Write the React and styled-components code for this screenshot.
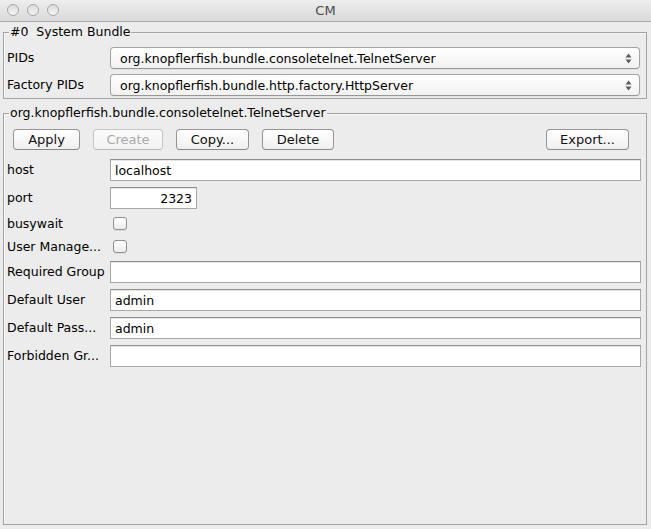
import React from 'react';
import styled, { createGlobalStyle } from 'styled-components';

const GlobalStyle = createGlobalStyle`
  html, body {
    margin: 0;
    padding: 0;
    background: #ececec;
  }
  body {
    font-family: "DejaVu Sans", "Liberation Sans", sans-serif;
    font-size: 12.5px;
    color: #000;
  }
`;

const Window = styled.div`
  width: 651px;
  height: 529px;
  display: flex;
  flex-direction: column;
  background: #ececec;
  overflow: hidden;
`;

const TitleBar = styled.div`
  height: 22px;
  box-sizing: border-box;
  position: relative;
  display: flex;
  align-items: center;
  justify-content: center;
  background: linear-gradient(#eeeeee, #d9d9d9);
  border-bottom: 1px solid #ababab;
`;

const Lights = styled.div`
  position: absolute;
  left: 7px;
  top: 4px;
  display: flex;
  gap: 8px;
`;

const Light = styled.span`
  width: 12px;
  height: 12px;
  box-sizing: border-box;
  border-radius: 50%;
  border: 1px solid #a7a7a7;
  background: linear-gradient(#dcdcdc, #f3f3f3);
`;

const Title = styled.span`
  font-size: 13px;
  color: #4a4a4a;
`;

const Content = styled.div`
  flex: 1;
  display: flex;
  flex-direction: column;
  padding: 0 4px 4px 3px;
  min-height: 0;
`;

const Group = styled.fieldset`
  margin: ${({ $top }) => $top}px 0 0;
  padding: ${({ $pad }) => $pad};
  min-width: 0;
  flex: ${({ $grow }) => ($grow ? 1 : 'none')};
  border: 1px solid #a3a3a3;
  box-shadow: inset 1px 1px 0 #f7f7f7;
  display: flex;
  flex-direction: column;
`;

const Legend = styled.legend`
  padding: 0 1px;
  margin-left: 2px;
  line-height: 16px;
`;

const Form = styled.div`
  display: grid;
  grid-template-columns: 103px 1fr;
  row-gap: ${({ $gap }) => $gap}px;
  align-items: center;
`;

const Label = styled.div`
  white-space: nowrap;
  overflow: hidden;
  line-height: 16px;
`;

const Combo = styled.div`
  height: 22px;
  box-sizing: border-box;
  border: 1px solid #a4a4a4;
  border-bottom-color: #979797;
  border-radius: 4px;
  background: linear-gradient(#ffffff, #f1f1f1);
  box-shadow: 0 1px 0 rgba(0, 0, 0, 0.04);
  display: flex;
  align-items: center;
  justify-content: space-between;
  padding: 0 7px 0 9px;
`;

const ComboText = styled.span`
  white-space: nowrap;
`;

const Arrows = () => (
  <svg width="7" height="11" viewBox="0 0 7 11">
    <path d="M3.5 0.5 L6.5 4.5 L0.5 4.5 Z" fill="#5a5a5a" />
    <path d="M3.5 10.5 L6.5 6.5 L0.5 6.5 Z" fill="#5a5a5a" />
  </svg>
);

const ButtonBar = styled.div`
  display: flex;
  align-items: center;
  gap: 13px;
  margin: 8px 12px 9px 6px;
`;

const Button = styled.div`
  width: ${({ $w }) => $w}px;
  height: 21px;
  box-sizing: border-box;
  border: 1px solid ${({ $off }) => ($off ? '#c6c6c6' : '#959595')};
  border-bottom-color: ${({ $off }) => ($off ? '#bdbdbd' : '#888')};
  border-radius: 4px;
  background: ${({ $off }) => ($off ? 'linear-gradient(#fbfbfb, #f2f2f2)' : 'linear-gradient(#ffffff, #efefef)')};
  color: ${({ $off }) => ($off ? '#a9a9a9' : '#111')};
  font-size: 13px;
  display: flex;
  align-items: center;
  justify-content: center;
  white-space: nowrap;
`;

const Spacer = styled.div`
  flex: 1;
`;

const Field = styled.div`
  width: ${({ $w }) => ($w ? `${$w}px` : 'auto')};
  height: 22px;
  box-sizing: border-box;
  background: #fff;
  border: 1px solid #a8a8a8;
  border-top-color: #8f8f8f;
  box-shadow: inset 0 1px 0 #e6e6e6;
  padding: 0 ${({ $right }) => ($right ? '4px' : '3px')} 0 4px;
  display: flex;
  align-items: center;
  justify-content: ${({ $right }) => ($right ? 'flex-end' : 'flex-start')};
  white-space: nowrap;
`;

const CheckRow = styled.div`
  height: 17px;
  display: flex;
  align-items: center;
`;

const Check = styled.span`
  width: 14px;
  height: 13px;
  margin-left: 3px;
  box-sizing: border-box;
  border: 1px solid #8e8e8e;
  border-radius: 3px;
  background: linear-gradient(#ffffff, #ececec);
  box-shadow: 0 1px 0 rgba(0, 0, 0, 0.06);
`;

const props = [
  { label: 'host', type: 'text', value: 'localhost' },
  { label: 'port', type: 'number', value: '2323' },
  { label: 'busywait', type: 'check' },
  { label: 'User Manage...', type: 'check' },
  { label: 'Required Group', type: 'text', value: '' },
  { label: 'Default User', type: 'text', value: 'admin' },
  { label: 'Default Pass...', type: 'text', value: 'admin' },
  { label: 'Forbidden Gr...', type: 'text', value: '' },
];

function App() {
  return (
    <Window>
      <GlobalStyle />
      <TitleBar>
        <Lights>
          <Light />
          <Light />
          <Light />
        </Lights>
        <Title>CM</Title>
      </TitleBar>
      <Content>
        <Group $top={2} $pad="7px 6px 2px 3px">
          <Legend>#0&nbsp;&nbsp;System Bundle</Legend>
          <Form $gap={5}>
            <Label>PIDs</Label>
            <Combo>
              <ComboText>org.knopflerfish.bundle.consoletelnet.TelnetServer</ComboText>
              <Arrows />
            </Combo>
            <Label>Factory PIDs</Label>
            <Combo>
              <ComboText>org.knopflerfish.bundle.http.factory.HttpServer</ComboText>
              <Arrows />
            </Combo>
          </Form>
        </Group>
        <Group $top={6} $pad="0 5px 0 3px" $grow>
          <Legend>org.knopflerfish.bundle.consoletelnet.TelnetServer</Legend>
          <ButtonBar>
            <Button $w={67}>Apply</Button>
            <Button $w={70} $off>Create</Button>
            <Button $w={73}>Copy...</Button>
            <Button $w={72}>Delete</Button>
            <Spacer />
            <Button $w={83}>Export...</Button>
          </ButtonBar>
          <Form $gap={6}>
            {props.map((p) => (
              <React.Fragment key={p.label}>
                <Label>{p.label}</Label>
                {p.type === 'check' ? (
                  <CheckRow>
                    <Check />
                  </CheckRow>
                ) : p.type === 'number' ? (
                  <Field $w={87} $right>{p.value}</Field>
                ) : (
                  <Field>{p.value}</Field>
                )}
              </React.Fragment>
            ))}
          </Form>
        </Group>
      </Content>
    </Window>
  );
}

export default App;
